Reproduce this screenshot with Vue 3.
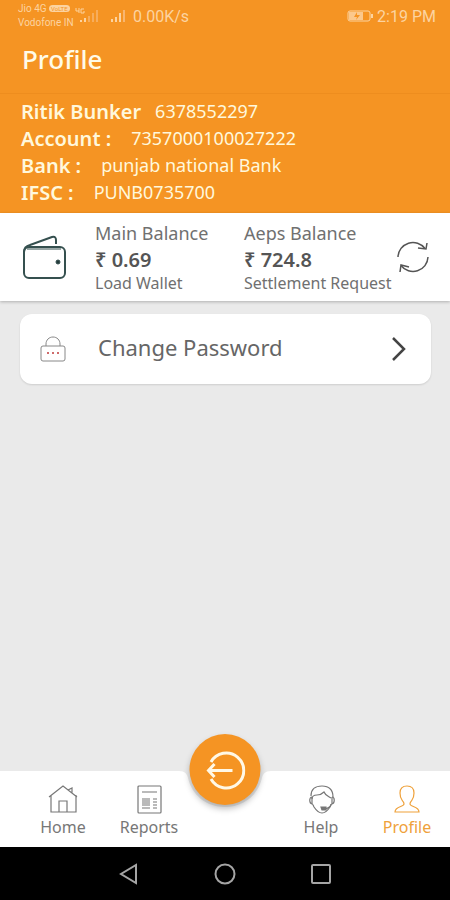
<template>
  <div class="app">
    <header class="header">
      <div class="status-bar">
        <div class="carriers">
          <div class="carrier">Jio 4G <span class="volte">VoLTE</span></div>
          <div class="carrier">Vodofone IN</div>
        </div>
        <svg class="signal-4g" viewBox="0 0 24 16" width="24" height="16">
          <path d="M2 0v3h3M5 0v5M10 1H7v4h3V3" fill="none" stroke="#fcd3a0" />
          <path d="M7 14v-2M11 14v-4" stroke="#fcd3a0" stroke-width="2" />
          <path d="M15 14V8M19 14V5M23 14V2" stroke="#f7ad5c" stroke-width="2" />
        </svg>
        <svg class="signal" viewBox="0 0 16 14" width="16" height="14">
          <path d="M2 13v-3M6 13V8M10 13V4" stroke="#fcd3a0" stroke-width="2" />
          <path d="M14 13V1" stroke="#f8b670" stroke-width="2" />
        </svg>
        <span class="speed">0.00K/s</span>
        <svg class="battery" viewBox="0 0 26 14" width="26" height="14">
          <rect x="1" y="2" width="22" height="10" rx="2" fill="none" stroke="#fcd3a0" />
          <rect x="2" y="3" width="14" height="8" fill="#fbc88c" />
          <path d="M25 5v4" stroke="#fcd3a0" stroke-width="2" />
          <path d="M10 3L7 8h3l-1 3 4-5h-3z" fill="#f59423" />
        </svg>
        <span class="clock">2:19 PM</span>
      </div>
      <h1 class="title">Profile</h1>
    </header>

    <section class="account">
      <div v-for="row in account" :key="row.label" class="account-row">
        <span class="account-label" :class="{ name: row.isName }">{{ row.label }}</span>
        <span class="account-value">{{ row.value }}</span>
      </div>
    </section>

    <section class="balances">
      <svg class="wallet" viewBox="0 0 46 46" width="46" height="46" fill="none" stroke="#35504f" stroke-width="2">
        <rect x="2" y="13" width="41" height="31" rx="5" />
        <path d="M2 18c0-4 2-6 6-7L30 3c3-1 4 1 4 3v4" />
        <path d="M5 15h34" stroke-width="1" />
        <circle cx="36" cy="28" r="2" fill="#243c3b" stroke-width="1" />
      </svg>
      <div v-for="item in balances" :key="item.title" class="balance">
        <div class="balance-title">{{ item.title }}</div>
        <div class="balance-amount">₹ {{ item.amount }}</div>
        <button type="button" class="balance-action">{{ item.action }}</button>
      </div>
      <button type="button" class="refresh" aria-label="Refresh">
        <svg viewBox="0 0 34 34" width="34" height="34" fill="none" stroke="#555" stroke-width="1.5">
          <path d="M2 17a15 15 0 0 1 27-8.500M32 17a15 15 0 0 1-27 8.500" />
          <path d="M31 3l-1 6-8-1M4 32l1-7 8 2" />
        </svg>
      </button>
    </section>

    <main class="content">
      <button type="button" class="menu-item">
        <svg class="lock" viewBox="0 0 26 26" width="26" height="26" fill="none" stroke="#888">
          <rect x="1" y="10" width="24" height="15" rx="2" />
          <path d="M6 10V8c0-4 3-7 7-7s7 3 7 7v2" />
          <path d="M7 17h2M12 17h2M17 17h2" stroke="#cf6b6b" stroke-width="2" />
        </svg>
        <span class="menu-label">Change Password</span>
        <svg class="chevron" viewBox="0 0 16 24" width="16" height="24" fill="none" stroke="#444" stroke-width="2.500">
          <path d="M2 1l11 11L2 23" />
        </svg>
      </button>
    </main>

    <nav class="tabs">
      <svg class="notch" viewBox="0 0 92 38" width="92" height="38">
        <path d="M0 0h92c-6 0-8 3-9 7C79 24 65 36 46 36S13 24 9 7C8 3 6 0 0 0z" fill="#eaeaea" />
      </svg>
      <button type="button" class="logout" aria-label="Logout">
        <svg viewBox="0 0 40 40" width="40" height="40" fill="none" stroke="#fff8e6" stroke-width="3">
          <path d="M5.500 12a17.500 17.500 0 1 1 0 17" />
          <path d="M27 20.500H3M9 14l-6 6.500 6 6.500" />
        </svg>
      </button>

      <a href="#" class="tab">
        <svg viewBox="0 0 30 30" width="30" height="30">
          <path d="M3 11v17h25V11M1 13L15 2l14 11M20 6l4-2v5M11 28V17h8v11" />
        </svg>
        <span>Home</span>
      </a>
      <a href="#" class="tab">
        <svg viewBox="0 0 30 30" width="30" height="30">
          <rect x="4" y="2" width="23" height="27" rx="1" />
          <path d="M8 8h15M8 15h8M8 17h8M8 19h8M8 21h8M8 24h8M19 15h4M19 18h4M19 21h4M19 24h4" />
        </svg>
        <span>Reports</span>
      </a>
      <span class="tab-gap"></span>
      <a href="#" class="tab">
        <svg viewBox="0 0 30 30" width="30" height="30">
          <path d="M5 12C5 5 9 2 16 2s11 4 11 11M6 15c0-3 2-4 5-4 3 0 5-1 7-3 1 3 4 4 7 6" />
          <path d="M6 13c-3 0-3 6 0 7 1 0 1 1 2 3 2 3 4 6 8 6s6-3 8-6c1-2 1-3 2-3 3-1 3-7 0-7" />
          <path d="M6 13v7M26 13v7" />
          <path d="M25 20c0 3-2 4-6 5" />
          <path d="M15 23h5v3h-4z" fill="#777" />
        </svg>
        <span>Help</span>
      </a>
      <a href="#" class="tab active">
        <svg viewBox="0 0 30 30" width="30" height="30">
          <path d="M12 20c0-2-1-2-2-4-2-3-2-5-2-7 0-5 3-7 7-7s7 2 7 7c0 2 0 4-2 7-1 2-2 2-2 4 0 3 9 2 9 8H3c0-6 9-5 9-8z" />
        </svg>
        <span>Profile</span>
      </a>
    </nav>

    <div class="system-bar">
      <button type="button" aria-label="Back">
        <svg viewBox="0 0 22 22" width="22" height="22"><path d="M18 2v18L3 11z" /></svg>
      </button>
      <button type="button" aria-label="Home screen">
        <svg viewBox="0 0 22 22" width="22" height="22"><circle cx="11" cy="11" r="9.500" /></svg>
      </button>
      <button type="button" aria-label="Recent apps">
        <svg viewBox="0 0 22 22" width="22" height="22"><rect x="2" y="2" width="18" height="18" rx="1" /></svg>
      </button>
    </div>
  </div>
</template>

<script setup>
const account = [
  { label: 'Ritik Bunker', value: '6378552297', isName: true },
  { label: 'Account :', value: '7357000100027222' },
  { label: 'Bank :', value: 'punjab national Bank' },
  { label: 'IFSC :', value: 'PUNB0735700' }
]

const balances = [
  { title: 'Main Balance', amount: '0.69', action: 'Load Wallet' },
  { title: 'Aeps Balance', amount: '724.8', action: 'Settlement Request' }
]
</script>

<style>
body {
  margin: 0;
  background: #eaeaea;
}
</style>

<style scoped>
.app {
  display: flex;
  flex-direction: column;
  min-height: 100vh;
  background: #eaeaea;
  color: #666;
  font-family: "Noto Sans", "Open Sans", sans-serif;
}

button {
  padding: 0;
  border: 0;
  background: none;
  color: inherit;
  font-family: inherit;
  cursor: pointer;
}

svg {
  display: block;
  flex-shrink: 0;
}

.header {
  background: #f59423;
  border-bottom: 1px solid #ee8d1e;
}

.status-bar {
  display: flex;
  align-items: center;
  height: 32px;
  padding: 0 14px 0 18px;
  color: #fcd3a0;
  font-family: Roboto, sans-serif;
  font-size: 16px;
}

.carriers {
  width: 56px;
  font-size: 10px;
  line-height: 14px;
  white-space: nowrap;
}

.volte {
  padding: 0 2px;
  border-radius: 4px;
  background: #fcd3a0;
  color: #f59423;
  font-size: 6px;
  vertical-align: 1px;
}

.signal {
  margin: 0 7px 0 12px;
}

.battery {
  margin-left: auto;
  margin-right: 4px;
}

.title {
  margin: 0;
  padding: 10px 22px 17px;
  color: #fffbe8;
  font-size: 26px;
  font-weight: 500;
  line-height: 34px;
}

.account {
  padding: 4px 21px 7px;
  background: #f59423;
  color: #fff8dc;
}

.account-row {
  display: flex;
  gap: 20px;
  align-items: center;
  line-height: 27px;
}

.account-label {
  font-size: 20px;
  font-weight: 600;
}

.account-label.name {
  margin-right: -6px;
}

.account-value {
  font-size: 18px;
}

.balances {
  display: flex;
  align-items: center;
  padding: 6px 20px 7px 22px;
  background: #fff;
  box-shadow: 0 1px 3px rgba(0, 0, 0, 0.25);
}

.wallet {
  margin-right: 27px;
}

.balance {
  width: 149px;
  color: #707070;
  white-space: nowrap;
}

.balance-title {
  font-size: 18px;
  line-height: 28px;
}

.balance-amount {
  color: #555;
  font-size: 20px;
  font-weight: 600;
  line-height: 25px;
}

.balance-action {
  display: block;
  font-size: 16px;
  line-height: 22px;
}

.refresh {
  margin-left: auto;
}

.content {
  flex: 1;
  padding: 13px 19px 13px 20px;
}

.menu-item {
  display: flex;
  align-items: center;
  width: 100%;
  height: 70px;
  padding: 0 24px 0 20px;
  border-radius: 12px;
  background: #fff;
  box-shadow: 0 1px 2px rgba(0, 0, 0, 0.12);
  text-align: left;
}

.menu-label {
  flex: 1;
  margin-left: 32px;
  padding-bottom: 4px;
  font-size: 22px;
  line-height: 30px;
}

.tabs {
  position: relative;
  display: grid;
  grid-template-columns: repeat(5, 1fr);
  padding: 13px 0 9px 20px;
  background: #fff;
}

.notch {
  position: absolute;
  top: 0;
  left: 50%;
  transform: translateX(-50%);
}

.logout {
  position: absolute;
  top: -37px;
  left: 50%;
  display: flex;
  align-items: center;
  justify-content: center;
  width: 71px;
  height: 71px;
  border-radius: 50%;
  background: #f59423;
  box-shadow: 0 4px 6px rgba(0, 0, 0, 0.25);
  transform: translateX(-50%);
}

.tab {
  display: flex;
  flex-direction: column;
  align-items: center;
  gap: 2px;
  color: #777;
  font-size: 16px;
  line-height: 22px;
  text-decoration: none;
}

.tab svg {
  fill: none;
  stroke: currentColor;
  stroke-width: 1.200;
}

.tab.active {
  color: #efa13a;
}

.system-bar {
  display: flex;
  align-items: center;
  justify-content: center;
  gap: 74px;
  height: 53px;
  background: #000;
}

.system-bar svg {
  fill: none;
  stroke: #a5a5a5;
  stroke-width: 2;
}
</style>
